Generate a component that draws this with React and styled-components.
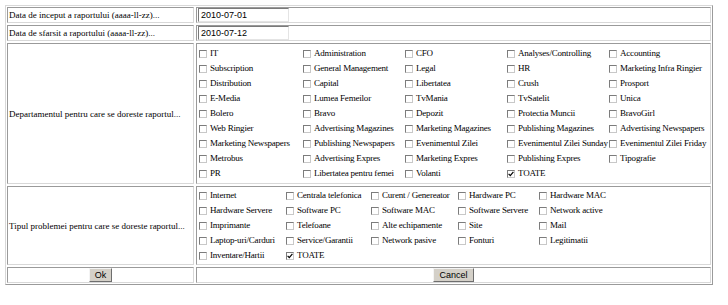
import React from 'react';
import styled, { createGlobalStyle } from 'styled-components';

const GlobalStyle = createGlobalStyle`
	body {
		margin: 0;
		padding: 0;
		background: #ffffff;
		font-family: "Liberation Serif", "Times New Roman", serif;
		font-size: 9px;
		color: #000000;
	}
`;

const Page = styled.div`
	padding: 5px;
`;

const FormTable = styled.div`
	display: grid;
	grid-template-columns: 187px 1fr;
	gap: 2px;
	padding: 1px;
	width: 708px;
	box-sizing: border-box;
	border: 1px solid;
	border-color: #d8d8d8 #9a9a9a #9a9a9a #d8d8d8;
`;

const Cell = styled.div`
	display: flex;
	align-items: center;
	justify-content: ${props => (props.$center ? 'center' : 'flex-start')};
	border: 1px solid;
	border-color: #9a9a9a #d8d8d8 #d8d8d8 #9a9a9a;
	padding: ${props => props.$pad || '0 1px'};
	min-height: 14px;
	line-height: 14px;
	white-space: nowrap;
	overflow: hidden;
`;

const DateInput = styled.input`
	box-sizing: border-box;
	width: 91px;
	height: 14px;
	margin: 0;
	padding: 0 2px;
	font-family: "Liberation Sans", Arial, sans-serif;
	font-size: 9px;
	color: #000;
	background: #fff;
	border: 1px solid;
	border-color: #7a7a7a #e4e4e4 #e4e4e4 #7a7a7a;
	outline: none;
`;

const OptionGrid = styled.div`
	display: grid;
	grid-template-columns: ${props => props.$cols};
	grid-auto-rows: 15px;
	justify-content: start;
	width: 100%;
`;

const Option = styled.label`
	display: flex;
	align-items: center;
	white-space: nowrap;
	line-height: 15px;
	letter-spacing: -0.2px;
`;

const Box = styled.span`
	display: inline-flex;
	align-items: center;
	justify-content: center;
	box-sizing: border-box;
	width: 8px;
	height: 8px;
	margin-right: 3px;
	border: 1px solid;
	border-color: #7c7c7c #c8c8c8 #c8c8c8 #7c7c7c;
	background: #ffffff;
	flex: none;
`;

const Button = styled.button`
	box-sizing: border-box;
	height: 14px;
	padding: 0 5px;
	margin: 0;
	font-family: "Liberation Sans", Arial, sans-serif;
	font-size: 9px;
	line-height: 12px;
	color: #000;
	background: #d4d0c8;
	border: 1px solid;
	border-color: #f4f4f4 #6e6e6e #6e6e6e #f4f4f4;
`;

const departments = [
	'IT', 'Administration', 'CFO', 'Analyses/Controlling', 'Accounting',
	'Subscription', 'General Management', 'Legal', 'HR', 'Marketing Infra Ringier',
	'Distribution', 'Capital', 'Libertatea', 'Crush', 'Prosport',
	'E-Media', 'Lumea Femeilor', 'TvMania', 'TvSatelit', 'Unica',
	'Bolero', 'Bravo', 'Depozit', 'Protectia Muncii', 'BravoGirl',
	'Web Ringier', 'Advertising Magazines', 'Marketing Magazines', 'Publishing Magazines', 'Advertising Newspapers',
	'Marketing Newspapers', 'Publishing Newspapers', 'Evenimentul Zilei', 'Evenimentul Zilei Sunday', 'Evenimentul Zilei Friday',
	'Metrobus', 'Advertising Expres', 'Marketing Expres', 'Publishing Expres', 'Tipografie',
	'PR', 'Libertatea pentru femei', 'Volanti', 'TOATE',
];

const problems = [
	'Internet', 'Centrala telefonica', 'Curent / Genereator', 'Hardware PC', 'Hardware MAC',
	'Hardware Servere', 'Software PC', 'Software MAC', 'Software Servere', 'Network active',
	'Imprimante', 'Telefoane', 'Alte echipamente', 'Site', 'Mail',
	'Laptop-uri/Carduri', 'Service/Garantii', 'Network pasive', 'Fonturi', 'Legitimatii',
	'Inventare/Hartii', 'TOATE',
];

function Check({ label, checked }) {
	return (
		<Option>
			<Box>
				{checked && (
					<svg width="6" height="6" viewBox="0 0 6 6">
						<path d="M0.6 2.8 L2.3 4.6 L5.4 0.9" fill="none" stroke="#000" strokeWidth="1.2" />
					</svg>
				)}
			</Box>
			{label}
		</Option>
	);
}

export default function App() {
	return (
		<>
			<GlobalStyle />
			<Page>
				<FormTable>
					<Cell>Data de inceput a raportului (aaaa-ll-zz)...</Cell>
					<Cell><DateInput defaultValue="2010-07-01" /></Cell>

					<Cell>Data de sfarsit a raportului (aaaa-ll-zz)...</Cell>
					<Cell><DateInput defaultValue="2010-07-12" /></Cell>

					<Cell>Departamentul pentru care se doreste raportul...</Cell>
					<Cell $pad="2px 2px">
						<OptionGrid $cols="104px 102px 102px 102px 1fr">
							{departments.map(d => (
								<Check key={d} label={d} checked={d === 'TOATE'} />
							))}
						</OptionGrid>
					</Cell>

					<Cell>Tipul problemei pentru care se doreste raportul...</Cell>
					<Cell $pad="1px 2px">
						<OptionGrid $cols="87px 85px 87px 81px auto">
							{problems.map(p => (
								<Check key={p} label={p} checked={p === 'TOATE'} />
							))}
						</OptionGrid>
					</Cell>

					<Cell $center $pad="0">
						<Button>Ok</Button>
					</Cell>
					<Cell $center $pad="0">
						<Button>Cancel</Button>
					</Cell>
				</FormTable>
			</Page>
		</>
	);
}
